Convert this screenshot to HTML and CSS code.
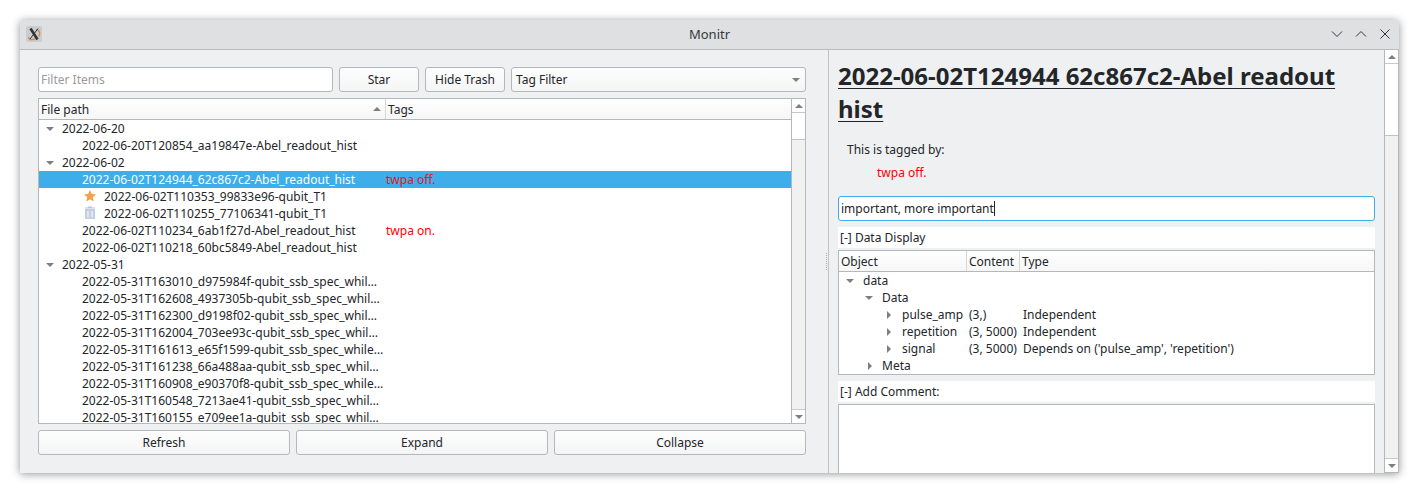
FILE: index.html
```html
<!DOCTYPE html>
<html lang="en">
<head>
<meta charset="utf-8">
<title>Monitr</title>
<link rel="stylesheet" href="styles.css">
</head>
<body>
<div class="window">
  <header class="titlebar">
    <span class="iconslot"><span class="appicon"><svg width="16" height="16" viewBox="0 0 16 16"><path d="M3 11 C2 14 6 14 9 13 M11 3.5 C14 5 14.5 8 12.5 10.5" stroke="#dd8a45" stroke-width="1.4" fill="none"/><path d="M4.5 2.5 L11.5 13.5" stroke="#33302e" stroke-width="2.6" fill="none"/><path d="M12 2.5 L4 13" stroke="#33302e" stroke-width="1" fill="none"/></svg></span></span>
    <span class="wintitle">Monitr</span>
    <span class="winbtns">
      <svg width="12" height="12" viewBox="0 0 12 12"><path d="M1 3.5 L6 8.5 L11 3.5" fill="none" stroke="#31363b" stroke-width="1"/></svg>
      <svg width="12" height="12" viewBox="0 0 12 12"><path d="M1 8.5 L6 3.5 L11 8.5" fill="none" stroke="#31363b" stroke-width="1"/></svg>
      <svg width="12" height="12" viewBox="0 0 12 12"><path d="M1.5 1.5 L10.5 10.5 M10.5 1.5 L1.5 10.5" fill="none" stroke="#31363b" stroke-width="1"/></svg>
    </span>
  </header>
  <div class="panes">
    <section class="leftpane">
      <div class="toolbar">
        <div class="field filter">Filter Items</div>
        <div class="btn small">Star</div>
        <div class="btn small">Hide Trash</div>
        <div class="btn combo"><span>Tag Filter</span><i class="tri down"></i></div>
      </div>
      <div class="tree filetree">
        <div class="treemain">
          <div class="thead">
            <div class="th pathcol">File path<i class="tri up sort"></i></div>
            <div class="th">Tags</div>
          </div>
          <div class="tbody">
            <div class="row l1"><i class="tri down"></i>2022-06-20</div>
            <div class="row l2"><span class="path">2022-06-20T120854_aa19847e-Abel_readout_hist</span></div>
            <div class="row l1"><i class="tri down"></i>2022-06-02</div>
            <div class="row l2 sel"><span class="path">2022-06-02T124944_62c867c2-Abel_readout_hist</span><span class="tag">twpa off.</span></div>
            <div class="row l3">
              <svg class="ico" width="14" height="14" viewBox="0 0 14 14"><path d="M7 1 L8.8 5 L13 5.4 L9.8 8.2 L10.8 12.6 L7 10.3 L3.2 12.6 L4.2 8.2 L1 5.4 L5.2 5 Z" fill="#f5a045"/></svg>
              <span>2022-06-02T110353_99833e96-qubit_T1</span>
            </div>
            <div class="row l3">
              <svg class="ico" width="14" height="14" viewBox="0 0 14 14"><path d="M5 0.5 H9 V1.5 H12 V2.5 H2 V1.5 H5 Z" fill="#b9c3dc"/><path d="M2 3 H12 V13 H2 Z" fill="#c5cde2"/><path d="M5 5 V11.5 M9 5 V11.5" stroke="#eef1f7" stroke-width="1.4"/></svg>
              <span>2022-06-02T110255_77106341-qubit_T1</span>
            </div>
            <div class="row l2"><span class="path">2022-06-02T110234_6ab1f27d-Abel_readout_hist</span><span class="tag">twpa on.</span></div>
            <div class="row l2"><span class="path">2022-06-02T110218_60bc5849-Abel_readout_hist</span></div>
            <div class="row l1"><i class="tri down"></i>2022-05-31</div>
            <div class="row l2"><span class="path">2022-05-31T163010_d975984f-qubit_ssb_spec_whil…</span></div>
            <div class="row l2"><span class="path">2022-05-31T162608_4937305b-qubit_ssb_spec_whil…</span></div>
            <div class="row l2"><span class="path">2022-05-31T162300_d9198f02-qubit_ssb_spec_whil…</span></div>
            <div class="row l2"><span class="path">2022-05-31T162004_703ee93c-qubit_ssb_spec_whil…</span></div>
            <div class="row l2"><span class="path">2022-05-31T161613_e65f1599-qubit_ssb_spec_while…</span></div>
            <div class="row l2"><span class="path">2022-05-31T161238_66a488aa-qubit_ssb_spec_whil…</span></div>
            <div class="row l2"><span class="path">2022-05-31T160908_e90370f8-qubit_ssb_spec_while…</span></div>
            <div class="row l2"><span class="path">2022-05-31T160548_7213ae41-qubit_ssb_spec_whil…</span></div>
            <div class="row l2"><span class="path">2022-05-31T160155_e709ee1a-qubit_ssb_spec_whil…</span></div>
          </div>
        </div>
        <div class="vbar">
          <div class="arrowbtn"><i class="tri up"></i></div>
          <div class="thumb thumb-left"></div>
          <div class="track"></div>
          <div class="arrowbtn bottom"><i class="tri down"></i></div>
        </div>
      </div>
      <div class="actions">
        <div class="btn">Refresh</div>
        <div class="btn">Expand</div>
        <div class="btn">Collapse</div>
      </div>
    </section>
    <div class="splitter"><span class="dots"></span></div>
    <section class="rightpane">
      <div class="detail">
        <h1 class="heading">2022-06-02T124944 62c867c2-Abel readout hist</h1>
        <p class="taggedby">This is tagged by:</p>
        <p class="taggedtag">twpa off.</p>
        <div class="field focus"><span>important, more important</span><i class="caret"></i></div>
        <div class="groupbar first">[-] Data Display</div>
        <div class="tree datatree">
          <div class="thead">
            <div class="th objcol">Object</div>
            <div class="th contentcol">Content</div>
            <div class="th">Type</div>
          </div>
          <div class="drow d1"><i class="tri down"></i><span>data</span></div>
          <div class="drow d2"><i class="tri down"></i><span>Data</span></div>
          <div class="drow d3"><i class="tri right"></i><span class="dname">pulse_amp</span><span class="dcontent">(3,)</span><span>Independent</span></div>
          <div class="drow d3"><i class="tri right"></i><span class="dname">repetition</span><span class="dcontent">(3, 5000)</span><span>Independent</span></div>
          <div class="drow d3"><i class="tri right"></i><span class="dname">signal</span><span class="dcontent">(3, 5000)</span><span>Depends on ('pulse_amp', 'repetition')</span></div>
          <div class="drow d2b"><i class="tri right"></i><span>Meta</span></div>
        </div>
        <div class="groupbar">[-] Add Comment:</div>
        <div class="comment"></div>
      </div>
      <div class="vbar outer">
        <div class="arrowbtn"><i class="tri up"></i></div>
        <div class="thumb thumb-right"></div>
        <div class="track"></div>
        <div class="arrowbtn bottom"><i class="tri down"></i></div>
      </div>
    </section>
  </div>
</div>
</body>
</html>
```
FILE: styles.css
```css
* { box-sizing: border-box; }
html, body { margin: 0; height: 100%; background: #fff; overflow: hidden; }
body { padding: 20px 20px 20px 20px; font: 12px/17px "Noto Sans", sans-serif; color: #232629; }

.window {
  width: 1379px; height: 453px;
  display: flex; flex-direction: column;
  background: #eff0f1;
  border-radius: 3px 3px 0 0;
  box-shadow: 0 1px 9px rgba(0,0,0,.42);
  overflow: hidden;
}

.titlebar {
  height: 30px; flex: none;
  display: flex; align-items: center;
  padding: 0 8px 1px 6px;
  background: #dee0e2;
  border-bottom: 1px solid #b9bbbd;
  font-size: 13px;
}
.iconslot { flex: 1; display: flex; }
.appicon { width: 16px; height: 16px; background: #c8cdd1; border-radius: 2px; display: flex; }
.wintitle { color: #33383c; margin-left: 2px; }
.winbtns { flex: 1; display: flex; gap: 12px; justify-content: flex-end; }

.panes { flex: 1; display: flex; min-height: 0; }

.leftpane { width: 808px; flex: none; padding: 17px 22px 18px 18px; display: flex; flex-direction: column; gap: 6px; }
.toolbar { display: flex; gap: 6px; height: 25px; }
.field {
  height: 25px; background: #fff;
  border: 1px solid #b5b7b9; border-radius: 3px;
  padding: 0 2px; line-height: 23px;
}
.filter { width: 295px; color: #9a9c9e; }
.btn {
  flex: 1; height: 25px;
  background: linear-gradient(#fdfdfd, #f4f5f5);
  border: 1px solid #b5b7b9; border-radius: 3px;
  text-align: center; line-height: 23px;
}
.btn.small { flex: none; width: 80px; }
.combo { flex: none; width: 295px; display: flex; align-items: center; justify-content: space-between; padding: 0 5px 0 4px; }

.tree { background: #fff; border: 1px solid #b5b7b9; }
.filetree { flex: 1; min-height: 0; display: flex; overflow: hidden; }
.treemain { flex: 1; min-width: 0; display: flex; flex-direction: column; }
.thead {
  height: 21px; flex: none; display: flex;
  background: linear-gradient(#fff, #f6f6f7);
  border-bottom: 1px solid #b5b7b9;
  line-height: 21px;
}
.th { padding-left: 2px; position: relative; }
.pathcol { width: 347px; border-right: 1px solid #d5d7d8; }
.sort { position: absolute; right: 4px; top: 8px; }
.tbody { flex: 1; min-height: 0; overflow: hidden; }

.tri { display: inline-block; width: 0; height: 0; flex: none; }
.tri.down { border-left: 4px solid transparent; border-right: 4px solid transparent; border-top: 4px solid #7c7e80; }
.tri.up { border-left: 4px solid transparent; border-right: 4px solid transparent; border-bottom: 4px solid #7c7e80; }
.tri.right { border-top: 4px solid transparent; border-bottom: 4px solid transparent; border-left: 4px solid #7c7e80; }

.row { height: 17px; display: flex; align-items: center; white-space: nowrap; }
.row.l1 { padding-left: 7px; }
.row.l1 .tri { margin-right: 8px; }
.row.l2 { padding-left: 43px; }
.row.l3 { padding-left: 44px; }
.path { width: 304px; flex: none; }
.tag { color: #f00; }
.sel { background: #3daee9; color: #fcfcfc; }
.sel .tag { color: #f01020; }
.ico { margin-right: 7px; margin-bottom: 2px; flex: none; }

.vbar { width: 14px; flex: none; display: flex; flex-direction: column; background: #f1f1f1; border-left: 1px solid #b5b7b9; }
.vbar.outer { width: 15px; border-right: 1px solid #b5b7b9; border-bottom: 1px solid #b5b7b9; }
.arrowbtn { height: 14px; flex: none; background: #fff; border-bottom: 1px solid #c8c9ca; display: flex; align-items: center; justify-content: center; }
.arrowbtn.bottom { border-bottom: 0; border-top: 1px solid #c8c9ca; }
.thumb { background: #fff; border-bottom: 1px solid #c0c2c3; flex: none; }
.thumb-left { height: 27px; }
.thumb-right { height: 72px; }
.track { flex: 1; }

.actions { display: flex; gap: 6px; }

.splitter { width: 1px; flex: none; background: #bfc1c3; position: relative; }
.dots { position: absolute; left: -2px; top: 203px; height: 17px; border-left: 1px dotted #a8aaac; }

.rightpane { flex: 1; min-width: 0; display: flex; }
.detail { flex: 1; min-width: 0; padding: 9px 9px 0 9px; overflow: hidden; }
.heading { margin: 0; font-size: 24px; line-height: 33px; font-weight: 700; text-decoration: underline; text-decoration-thickness: 1px; text-underline-offset: 3px; }
.taggedby { margin: 16px 0 0 9px; }
.taggedtag { margin: 6px 0 0 39px; color: #f00; }
.focus { border-color: #3daee9; margin-top: 15px; display: flex; align-items: center; }
.caret { width: 1px; height: 15px; background: #232629; }
.groupbar { background: #fff; height: 21px; line-height: 21px; padding-left: 2px; margin-top: 6px; margin-bottom: 2px; }
.datatree { height: 125px; overflow: hidden; }
.drow { height: 17px; display: flex; align-items: center; white-space: nowrap; }
.d1 { padding-left: 7px; }
.d1 .tri { margin-right: 9px; }
.d2 { padding-left: 26px; }
.d2 .tri { margin-right: 9px; }
.d2b { padding-left: 29px; }
.d2b .tri { margin-right: 10px; }
.d3 { padding-left: 48px; }
.d3 .tri { margin-right: 11px; }
.objcol { width: 128px; border-right: 1px solid #d5d7d8; }
.contentcol { width: 53px; border-right: 1px solid #d5d7d8; }
.dname { width: 67px; flex: none; }
.dcontent { width: 54px; flex: none; }
.comment { height: 70px; background: #fff; border: 1px solid #b5b7b9; border-bottom: 0; }
```
